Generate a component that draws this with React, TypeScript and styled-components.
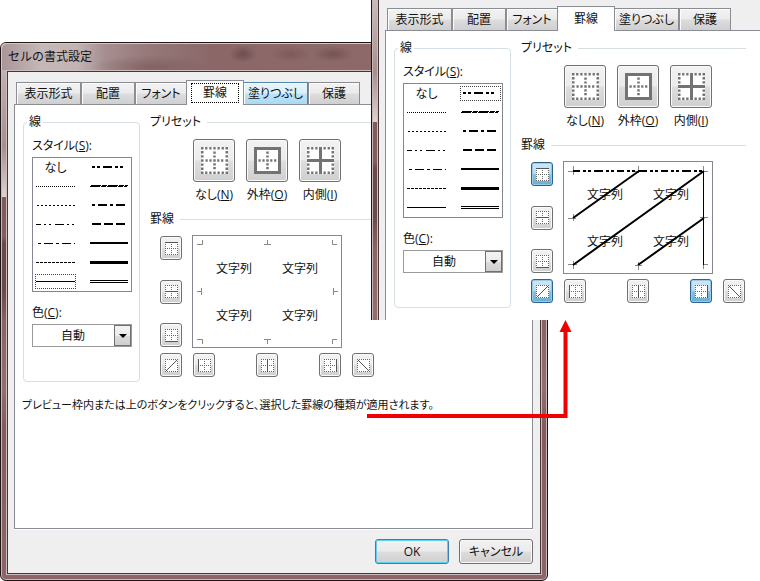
import React from "react";
import styled, { createGlobalStyle, css } from "styled-components";

const GlobalStyle = createGlobalStyle`
  *, *::before, *::after { box-sizing: border-box; }
  body {
    margin: 0;
    background: #fff;
    color: #111;
    font: 12px/16px "Open Sans", "Noto Sans CJK JP", sans-serif;
    font-feature-settings: "palt";
  }
  button, select { font: inherit; color: inherit; font-feature-settings: inherit; }
`;

const Desktop = styled.main`
  position: relative;
  min-height: max(100vh, 581px);
  overflow: hidden;
`;

const glass = css<{ $shade: number }>`
  background: linear-gradient(
    #c9bcbd 0,
    #a58f91 ${(p) => p.$shade - 50}px,
    #e0d2d3 ${(p) => p.$shade}px,
    #7f5a5a ${(p) => p.$shade}px,
    #835e5e ${(p) => p.$shade + 40}px,
    #6b4a4b ${(p) => p.$shade + 46}px,
    #6b4a4b ${(p) => p.$shade + 95}px,
    #8a6364 ${(p) => p.$shade + 125}px,
    #946f70 ${(p) => p.$shade + 190}px,
    #845c5d ${(p) => p.$shade + 230}px,
    #8c6667 100%
  );
`;

const DialogWindow = styled.section`
  ${glass}
  position: absolute;
  top: 42px;
  left: 0;
  right: 212px;
  bottom: 0;
  display: flex;
  flex-direction: column;
  padding: 0 5px 5px;
  border: 1px solid #201617;
  border-radius: 6px;
  box-shadow: inset 0 0 0 1px #c9b7b8;
`;

const DialogSlice = styled.section`
  ${glass}
  position: absolute;
  top: 0;
  left: 371px;
  right: 0;
  padding-left: 5px;
  border-left: 1px solid #201617;
  box-shadow: inset 1px 0 0 #c9b7b8;
`;

const TitleBar = styled.header`
  height: 27px;
  margin: 0 -5px;
  padding: 6px 7px;
  border-radius: 5px 5px 0 0;
  box-shadow: inset 1px 1px 0 #d5c6c7, inset -1px 0 0 #c9b7b8;
  background:
    radial-gradient(ellipse 14px 9px at 242px 11px, #664748cc, transparent),
    radial-gradient(ellipse 20px 8px at 290px 11px, #73505199, transparent),
    radial-gradient(ellipse 20px 8px at 332px 11px, #6c4a4bbb, transparent),
    radial-gradient(ellipse 60px 12px at 150px 24px, #77545599, transparent),
    linear-gradient(90deg, #a99597 0, #c4b8b9 40px, #c2b3b4 76px, #a68e8f 104px, #957879 150px, #8b6768 210px, #8f6c6c 100%);
`;

const Title = styled.h1`
  margin: 0;
  font-size: 12px;
  line-height: 16px;
  font-weight: 400;
  font-feature-settings: normal;
`;

const Body = styled.div<{ $slice?: boolean }>`
  flex: 1;
  display: flex;
  flex-direction: column;
  background: #efefef;
  border: 1px solid #4a3536;
  box-shadow: 0 0 0 1px #cdbcbd;
  margin: 1px;
  padding: 8px 7px 9px 6px;
  ${(p) =>
    p.$slice &&
    css`
      margin: 0 0 0 1px;
      border-width: 0 0 0 1px;
      box-shadow: -1px 0 0 #cdbcbd;
      padding: 6px 0 0 6px;
    `}
`;

const TabList = styled.div`
  display: flex;
  align-items: flex-end;
  padding-left: 2px;
  height: 24px;
`;

const Tab = styled.button<{ $width: number; $hot?: boolean }>`
  flex: none;
  width: ${(p) => p.$width}px;
  height: 22px;
  padding: 0;
  border: 1px solid #8a8d93;
  border-bottom: 0;
  box-shadow: inset 1px 1px 0 #fcfcfc;
  white-space: nowrap;
  background: ${(p) =>
    p.$hot
      ? "linear-gradient(#e6f4fc 0, #dcf0fb 48%, #bce3f8 52%, #a9daf4 100%)"
      : "linear-gradient(#f2f2f2 0, #ebebeb 48%, #dddddd 52%, #cfcfcf 100%)"};
  border-color: ${(p) => (p.$hot ? "#4f86ab" : "#8a8d93")};

  &[aria-selected="true"] {
    position: relative;
    height: 25px;
    margin: 0 -1px -1px;
    background: #fff;
    z-index: 1;
  }
`;

const FocusRing = styled.span<{ $on?: boolean }>`
  display: block;
  margin: 2px 4px;
  line-height: 18px;
  border: 1px dotted ${(p) => (p.$on ? "#000" : "transparent")};
`;

const Pane = styled.div<{ $slice?: boolean }>`
  flex: 1;
  padding: 9px 8px;
  background: #fff;
  border: 1px solid #8a8d93;
  box-shadow: 0 1px 0 #fff;
  ${(p) =>
    p.$slice &&
    css`
      border-width: 1px 0 0 1px;
      padding: 9px 14px 12px 8px;
      box-shadow: none;
    `}
`;

const Columns = styled.div`
  display: flex;
  gap: 10px;
`;

const LineGroup = styled.fieldset`
  flex: none;
  width: 117px;
  margin: 0;
  padding: 8px 7px 34px 8px;
  border: 1px solid #d5dfe5;
  border-radius: 4px;
`;

const Legend = styled.legend`
  margin-left: -5px;
  padding: 0 2px;
`;

const FieldLabel = styled.label`
  display: block;
  margin-bottom: 3px;
`;

const StyleList = styled.div`
  display: grid;
  grid-template: repeat(7, 19px) / 41px 41px;
  grid-auto-flow: column;
  justify-content: space-between;
  align-items: center;
  padding: 0 1px 0 2px;
  margin-bottom: 13px;
  border: 1px solid #828790;
`;

const StyleOption = styled.button`
  display: flex;
  align-items: center;
  justify-content: center;
  width: 41px;
  height: 15px;
  padding: 0;
  border: 1px dotted transparent;
  background: none;
  &[aria-selected="true"] { border-color: #444; }
`;

const SelectBox = styled.div`
  position: relative;
  display: flex;
`;

const ColorSelect = styled.select`
  appearance: none;
  width: 100%;
  height: 23px;
  padding: 0 18px 0 28px;
  border: 1px solid #9a9a9a;
  border-radius: 0;
  background: #fff;
`;

const DropArrow = styled.span`
  position: absolute;
  inset: 1px 1px 1px auto;
  width: 17px;
  display: grid;
  place-items: center;
  pointer-events: none;
  border: 1px solid #707070;
  background: linear-gradient(#f3f3f3 0, #ebebeb 50%, #dcdcdc 51%, #cfcfcf 100%);
`;

const Settings = styled.div`
  flex: 1;
  min-width: 0;
`;

const SectionTitle = styled.h2`
  display: flex;
  align-items: center;
  gap: 6px;
  margin: 0;
  font-size: 12px;
  line-height: 16px;
  font-weight: 400;
  white-space: nowrap;
  &::after {
    content: "";
    flex: 1;
    height: 1px;
    background: #d8dfe0;
  }
`;

const Presets = styled.div`
  display: flex;
  gap: 11px;
  margin: 9px 0 8px 43px;
`;

const Preset = styled.div`
  display: flex;
  flex-direction: column;
  align-items: center;
  gap: 5px;
  width: 42px;
  white-space: nowrap;
`;

const IconButton = styled.button<{ $large?: boolean; $pressed?: boolean }>`
  display: grid;
  place-items: center;
  width: ${(p) => (p.$large ? 42 : 22)}px;
  height: ${(p) => (p.$large ? 43 : 24)}px;
  padding: 0;
  border: 1px solid ${(p) => (p.$pressed ? "#2c628b" : "#707070")};
  border-radius: 3px;
  box-shadow: inset 0 0 0 1px ${(p) => (p.$pressed ? "#9cc9e4" : "#fafafa")};
  background: ${(p) =>
    p.$pressed
      ? "linear-gradient(#cfe8f6 0, #b6dcf1 48%, #86c1e2 52%, #68aed6 100%)"
      : "linear-gradient(#f2f2f2 0, #ebebeb 48%, #dddddd 52%, #cfcfcf 100%)"};
`;

const Editor = styled.div`
  display: grid;
  grid-template-columns: 22px 150px 22px;
  gap: 5px 10px;
  margin: 8px 0 0 10px;
`;

const SideButtons = styled.div`
  display: flex;
  flex-direction: column;
  justify-content: space-between;
  padding: 1px 0;
`;

const Preview = styled.div`
  grid-column: 2 / 4;
  position: relative;
  display: grid;
  grid-template: 47px 47px / 66px 66px;
  place-items: center;
  width: 150px;
  height: 113px;
  padding: 9px 8px;
  border: 1px solid #828790;
`;

const PreviewLines = styled.svg`
  position: absolute;
  top: -1px;
  left: -1px;
`;

const BottomButtons = styled.div`
  display: flex;
  justify-content: space-between;
  padding: 0 1px;
`;

const Hint = styled.p`
  margin: 15px 0 0 -1px;
  font-size: 11px;
  white-space: nowrap;
`;

const Footer = styled.footer`
  display: flex;
  justify-content: flex-end;
  gap: 10px;
  margin-top: 10px;
`;

const PushButton = styled.button<{ $primary?: boolean }>`
  width: 74px;
  height: 25px;
  padding: 0;
  border: 1px solid ${(p) => (p.$primary ? "#3c7fb1" : "#707070")};
  border-radius: 3px;
  box-shadow: inset 0 0 0 1px ${(p) => (p.$primary ? "#5fd0f2" : "#fafafa")};
  background: linear-gradient(#f2f2f2 0, #ebebeb 48%, #dddddd 52%, #cfcfcf 100%);
`;

const Connector = styled.svg`
  position: absolute;
  top: 320px;
  left: 367px;
  pointer-events: none;
`;

const tabs = [
  { label: "表示形式", width: 65 },
  { label: "配置", width: 54 },
  { label: "フォント", width: 52 },
  { label: "罫線", width: 58 },
  { label: "塗りつぶし", width: 65 },
  { label: "保護", width: 52 },
];

type Stroke = { w: number; dash?: string; from?: number; kind?: "double" | "slant" };

const lineStyles: (Stroke | null)[] = [
  null,
  { w: 1, dash: "1 1" },
  { w: 1, dash: "2 2", from: 1 },
  { w: 1, dash: "5 3 2 3 2 4 9 3 2 3 2" },
  { w: 1, dash: "3 3 9 3", from: 2 },
  { w: 1, dash: "3 1" },
  { w: 1 },
  { w: 2, dash: "3 2 3 3 9 3", from: 2 },
  { w: 2, kind: "slant" },
  { w: 2, dash: "3 3 9 3", from: 2 },
  { w: 2, dash: "9 3", from: 2 },
  { w: 2 },
  { w: 3 },
  { w: 1, kind: "double" },
];

function Sample({ stroke }: { stroke: Stroke }) {
  const { w, dash, from = 0, kind } = stroke;
  return (
    <svg width="39" height="5" stroke="#000" fill="none" aria-hidden="true">
      {kind === "double" && <path d="M0 1.5H38M0 3.5H38" />}
      {kind === "slant" && (
        <>
          <path d="M1 1.5H38" strokeDasharray="10 1 5 1" />
          <path d="M0 2.5H37" strokeDasharray="10 1 5 1" />
        </>
      )}
      {!kind && (
        <path
          d={`M${from} ${w % 2 ? 2.5 : 2}H${dash && w === 2 ? 36 : w === 1 ? 39 : 38}`}
          strokeWidth={w}
          strokeDasharray={dash}
        />
      )}
    </svg>
  );
}

type PresetKind = "none" | "outline" | "inside";

function PresetIcon({ kind }: { kind: PresetKind }) {
  return (
    <svg width="27" height="27" fill="none" stroke="#737373" aria-hidden="true">
      <rect width="27" height="27" fill="#fff" stroke="none" />
      {kind === "outline" ? (
        <rect x="1.5" y="1.5" width="24" height="24" strokeWidth="3" />
      ) : (
        <path d="M0 1.25H27M0 25.75H27M1.25 0V27M25.75 0V27" strokeWidth="2.5" strokeDasharray="2.3 1.82" />
      )}
      {kind === "inside" ? (
        <path d="M0 13.5H27M13.5 0V27" strokeWidth="3" />
      ) : (
        <path d="M4.500 13.5H23M13.500 4.5V23" strokeWidth="2.5" strokeDasharray="2.2 1.7" />
      )}
    </svg>
  );
}

const edges = {
  top: "M0 .5H13",
  middle: "M0 6.5H13",
  bottom: "M0 12.5H13",
  left: "M.5 0V13",
  center: "M6.5 0V13",
  right: "M12.5 0V13",
  rising: "M1 12L12 1",
  falling: "M1 1L12 12",
};
type Edge = keyof typeof edges;

const edgeLabels: Record<Edge, string> = {
  top: "上罫線",
  middle: "横罫線",
  bottom: "下罫線",
  left: "左罫線",
  center: "縦罫線",
  right: "右罫線",
  rising: "右上がり斜線",
  falling: "右下がり斜線",
};

function EdgeButton({ edge, active }: { edge: Edge; active: Edge[] }) {
  const diagonal = edge === "rising" || edge === "falling";
  const pressed = active.includes(edge);
  return (
    <IconButton type="button" $pressed={pressed} aria-pressed={pressed} aria-label={edgeLabels[edge]}>
      <svg width="13" height="13" fill="none" stroke="#666" aria-hidden="true">
        <rect width="13" height="13" fill="#fff" stroke="none" />
        <path d="M0 .5H13M0 12.5H13M.5 0V13M12.5 0V13" strokeDasharray="1 1" />
        {!diagonal && <path d="M0 6.5H13M6.5 0V13" strokeDasharray="1 1" />}
        <path d={edges[edge]} stroke="#555" />
      </svg>
    </IconButton>
  );
}

const cornerMarks =
  "M5 9.5H10.5V5M72 9.5H79M75.5 5V9.5M145 9.5H140.5V5M5 56.5H9.5M9.5 53V60M146 56.5H141.5M141.5 53V60M5 104.5H10.5V109M72 104.5H79M75.5 109V104.5M145 104.5H140.5V109";
const crossMarks =
  "M5 10.5H14M10.5 5V14M72 10.5H79M75.5 5V12M137 10.5H145M140.5 5V14M5 57.5H13M10.5 53V60M137 56.5H145M5 103.5H14M10.5 100V108M72 104.5H79M75.5 101V109M140 103.5H145M140.5 104V108";

function LinePreview({ drawn }: { drawn?: boolean }) {
  return (
    <Preview>
      <span>文字列</span>
      <span>文字列</span>
      <span>文字列</span>
      <span>文字列</span>
      <PreviewLines width="150" height="113" fill="none" stroke="#000" aria-hidden="true">
        <path d={drawn ? crossMarks : cornerMarks} stroke="#888" />
        {drawn && (
          <>
            <path d="M10 10H140" strokeWidth="2" strokeDasharray="7 3 3 2 3 3 9 3 3 2 3 3" />
            <path d="M140.5 10V104" />
            <path d="M10 57L76 10M10 104L141 10M75 104L141 57" strokeWidth="2" />
          </>
        )}
      </PreviewLines>
    </Preview>
  );
}

type SheetProps = { id: string; selected: number; active?: Edge[]; slice?: boolean; children?: React.ReactNode };

function BorderSheet({ id, selected, active = [], slice, children }: SheetProps) {
  return (
    <>
      <TabList role="tablist">
        {tabs.map((tab) => {
          const current = tab.label === "罫線";
          return (
            <Tab
              key={tab.label}
              type="button"
              role="tab"
              aria-selected={current}
              $width={tab.width}
              $hot={!slice && tab.label === "塗りつぶし"}
            >
              {current ? <FocusRing $on={!slice}>{tab.label}</FocusRing> : tab.label}
            </Tab>
          );
        })}
      </TabList>
      <Pane $slice={slice}>
        <Columns>
          <LineGroup>
            <Legend>線</Legend>
            <FieldLabel as="div" id={`${id}-style`}>
              スタイル(<u>S</u>):
            </FieldLabel>
            <StyleList role="listbox" aria-labelledby={`${id}-style`}>
              {lineStyles.map((stroke, i) => (
                <StyleOption key={i} type="button" role="option" aria-selected={i === selected}>
                  {stroke ? <Sample stroke={stroke} /> : "なし"}
                </StyleOption>
              ))}
            </StyleList>
            <FieldLabel htmlFor={`${id}-color`}>
              色(<u>C</u>):
            </FieldLabel>
            <SelectBox>
              <ColorSelect id={`${id}-color`}>
                <option>自動</option>
              </ColorSelect>
              <DropArrow>
                <svg width="8" height="4" aria-hidden="true">
                  <path d="M0 0H8L4 4Z" />
                </svg>
              </DropArrow>
            </SelectBox>
          </LineGroup>
          <Settings>
            <SectionTitle>プリセット</SectionTitle>
            <Presets>
              <Preset>
                <IconButton type="button" $large aria-labelledby={`${id}-none`}>
                  <PresetIcon kind="none" />
                </IconButton>
                <span id={`${id}-none`}>
                  なし(<u>N</u>)
                </span>
              </Preset>
              <Preset>
                <IconButton type="button" $large aria-labelledby={`${id}-outline`}>
                  <PresetIcon kind="outline" />
                </IconButton>
                <span id={`${id}-outline`}>
                  外枠(<u>O</u>)
                </span>
              </Preset>
              <Preset>
                <IconButton type="button" $large aria-labelledby={`${id}-inside`}>
                  <PresetIcon kind="inside" />
                </IconButton>
                <span id={`${id}-inside`}>
                  内側(<u>I</u>)
                </span>
              </Preset>
            </Presets>
            <SectionTitle>罫線</SectionTitle>
            <Editor>
              <SideButtons>
                <EdgeButton edge="top" active={active} />
                <EdgeButton edge="middle" active={active} />
                <EdgeButton edge="bottom" active={active} />
              </SideButtons>
              <LinePreview drawn={active.length > 0} />
              <EdgeButton edge="rising" active={active} />
              <BottomButtons>
                <EdgeButton edge="left" active={active} />
                <EdgeButton edge="center" active={active} />
                <EdgeButton edge="right" active={active} />
              </BottomButtons>
              <EdgeButton edge="falling" active={active} />
            </Editor>
          </Settings>
        </Columns>
        {children}
      </Pane>
    </>
  );
}

export default function App() {
  return (
    <Desktop>
      <GlobalStyle />
      <DialogWindow $shade={154}>
        <TitleBar>
          <Title>セルの書式設定</Title>
        </TitleBar>
        <Body>
          <BorderSheet id="before" selected={6}>
            <Hint>プレビュー枠内または上のボタンをクリックすると、選択した罫線の種類が適用されます。</Hint>
          </BorderSheet>
          <Footer>
            <PushButton type="button" $primary>
              OK
            </PushButton>
            <PushButton type="button">キャンセル</PushButton>
          </Footer>
        </Body>
      </DialogWindow>
      <DialogSlice $shade={122}>
        <Body $slice>
          <BorderSheet id="after" selected={7} active={["top", "rising", "right"]} slice />
        </Body>
      </DialogSlice>
      <Connector width="206" height="100" aria-hidden="true">
        <path d="M0 96H198.5V10" fill="none" stroke="#f00000" strokeWidth="4" />
        <path d="M198.5 0L204.5 12H192.5Z" fill="#f00000" />
      </Connector>
    </Desktop>
  );
}
